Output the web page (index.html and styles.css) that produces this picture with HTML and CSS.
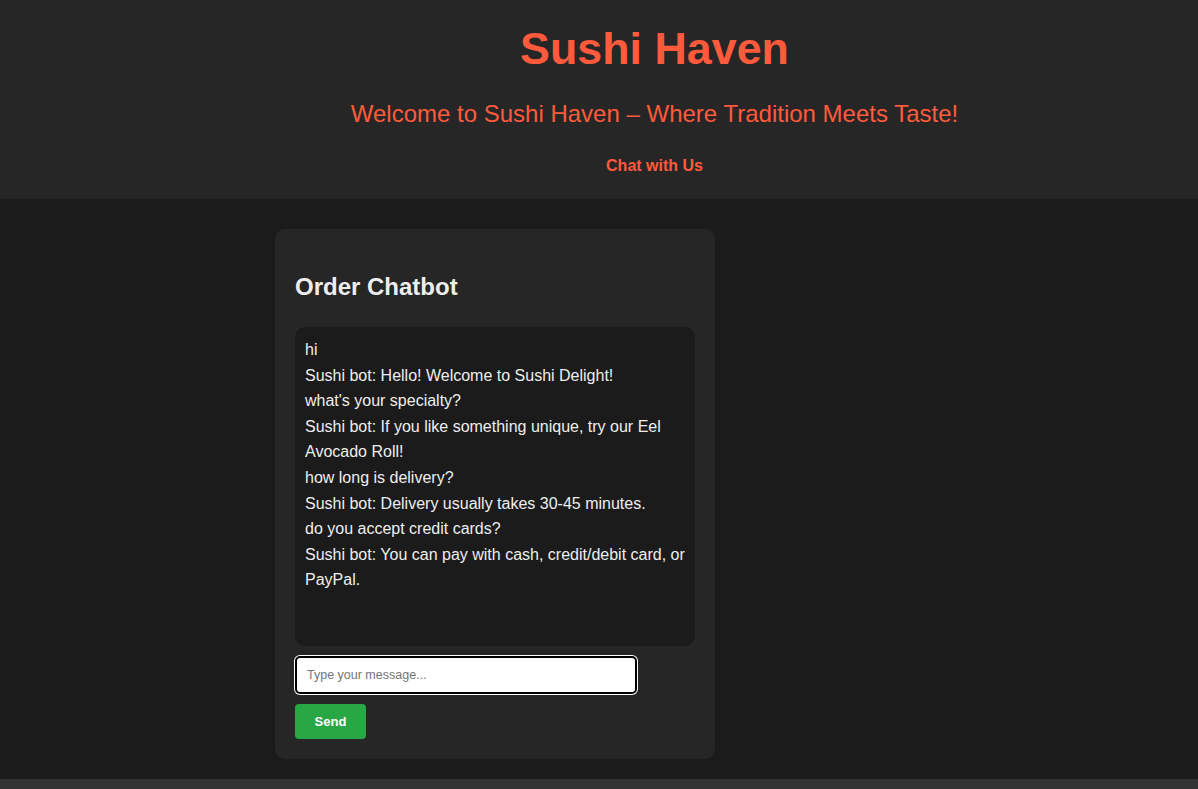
FILE: index.html
```html
<!DOCTYPE html>
<html lang="en">
<head>
<meta charset="utf-8">
<title>Sushi Haven</title>
<link rel="stylesheet" href="styles.css">
</head>
<body>
<header class="site-header">
  <h1 class="site-title">Sushi Haven</h1>
  <p class="site-tagline">Welcome to Sushi Haven – Where Tradition Meets Taste!</p>
  <nav class="site-nav"><a href="#chat" class="nav-link">Chat with Us</a></nav>
</header>
<main class="main">
  <section class="chat-card" id="chat">
    <h2 class="chat-title">Order Chatbot</h2>
    <div class="chat-log">
      <div class="msg">hi</div>
      <div class="msg">Sushi bot: Hello! Welcome to Sushi Delight!</div>
      <div class="msg">what's your specialty?</div>
      <div class="msg">Sushi bot: If you like something unique, try our Eel Avocado Roll!</div>
      <div class="msg">how long is delivery?</div>
      <div class="msg">Sushi bot: Delivery usually takes 30-45 minutes.</div>
      <div class="msg">do you accept credit cards?</div>
      <div class="msg">Sushi bot: You can pay with cash, credit/debit card, or PayPal.</div>
    </div>
    <input class="chat-input" type="text" placeholder="Type your message...">
    <button class="send-btn" type="button">Send</button>
  </section>
</main>
<footer class="site-footer"></footer>
</body>
</html>
```
FILE: styles.css
```css
* { box-sizing: border-box; }
html, body { margin: 0; padding: 0; }
body {
  background: #1b1b1b;
  font-family: "Liberation Sans", Arial, sans-serif;
  color: #eeeeee;
}
.site-header {
  background: #262626;
  height: 199px;
  padding: 23px 0 0 111px;
  text-align: center;
  color: #ff5a3c;
}
.site-title {
  margin: 0;
  font-size: 44.8px;
  line-height: 51.5px;
  font-weight: bold;
}
.site-tagline {
  margin: 25px 0 0;
  font-size: 24px;
  line-height: 27.6px;
}
.site-nav {
  margin-top: 30px;
  line-height: 18.4px;
}
.nav-link {
  color: #ff5a3c;
  font-weight: bold;
  font-size: 16px;
  text-decoration: none;
}
.main {
  padding: 30px 0 20px 275px;
}
.chat-card {
  width: 440px;
  background: #262626;
  border-radius: 10px;
  padding: 20px;
}
.chat-title {
  margin: 24px 0 27px;
  font-size: 24px;
  line-height: 27px;
  color: #eeeeee;
}
.chat-log {
  height: 319px;
  background: #1b1b1b;
  border-radius: 10px;
  padding: 10px;
  font-size: 16px;
  line-height: 25.6px;
  color: #eeeeee;
}
.chat-input {
  display: block;
  margin-top: 10px;
  width: 342px;
  height: 38px;
  padding: 0 10px;
  border: 2px solid #000;
  border-radius: 5px;
  box-shadow: 0 0 0 1px #fff;
  background: #fff;
  font-family: "Liberation Sans", Arial, sans-serif;
  font-size: 12.5px;
  color: #222;
  outline: none;
}
.chat-input::placeholder { color: #757575; }
.send-btn {
  display: block;
  margin-top: 10px;
  width: 71px;
  height: 35px;
  border: none;
  border-radius: 4px;
  background: #28a745;
  color: #fff;
  font-family: "Liberation Sans", Arial, sans-serif;
  font-weight: bold;
  font-size: 13px;
}
.site-footer {
  background: #333333;
  height: 40px;
}
```
